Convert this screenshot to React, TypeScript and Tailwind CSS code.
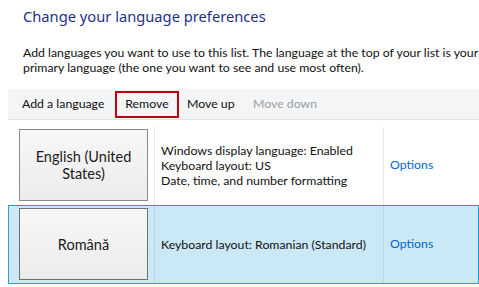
const rows = [
  {
    name: ["English (United", "States)"],
    details: ["Windows display language: Enabled", "Keyboard layout: US", "Date, time, and number formatting"],
    selected: false,
  },
  {
    name: ["Română"],
    details: ["Keyboard layout: Romanian (Standard)"],
    selected: true,
  },
];

function LanguageRow({ name, details, selected }: { name: string[]; details: string[]; selected: boolean }) {
  return (
    <div
      className={
        "flex h-[79px] border " +
        (selected ? "border-[#26a0da] bg-[#cbe8f6]" : "border-transparent bg-white")
      }
    >
      <div className="flex w-[145px] shrink-0 items-start pl-[10px] pt-[2px]">
        <div
          className={
            "flex h-[72px] w-[129px] flex-col items-center justify-center border bg-gradient-to-b from-[#f7f7f7] to-[#ececec] text-[14.5px] leading-[17px] text-[#1a1a1a] " +
            (selected ? "border-[#6b7278]" : "border-[#8a8a8a]")
          }
        >
          {name.map((n) => (
            <span key={n}>{n}</span>
          ))}
        </div>
      </div>
      <div
        className={
          "flex w-[229px] shrink-0 flex-col justify-center border-l pl-[6px] text-[12.3px] leading-[15px] text-[#111] whitespace-nowrap" +
          (selected ? " border-[#b3d7f0]" : " border-[#dceaf7]")
        }
      >
        {details.map((d) => (
          <span key={d}>{d}</span>
        ))}
      </div>
      <div
        className={
          "flex flex-1 items-center border-l pl-[6px] text-[12.3px] text-[#0066cc]" +
          (selected ? " border-[#b3d7f0]" : " border-[#dceaf7]")
        }
      >
        Options
      </div>
    </div>
  );
}

export default function App() {
  return (
    <div
      className="h-[287px] w-[479px] overflow-hidden bg-white"
      style={{ fontFamily: 'Lato, "Noto Sans", sans-serif' }}
    >
      <h1
        className="pl-[23px] pt-[6px] text-[14.7px] leading-[20px] text-[#1e3287]"
        style={{ fontFamily: '"Noto Sans", sans-serif' }}
      >
        Change your language preferences
      </h1>
      <p className="mt-[19px] whitespace-nowrap pl-[23px] text-[12.3px] leading-[15px] text-[#111]">
        Add languages you want to use to this list. The language at the top of your list is your
        <br />
        primary language (the one you want to see and use most often).
      </p>
      <div className="ml-[8px] mt-[14px] flex h-[31px] items-center border-b border-[#e2e4e7] bg-[#f4f5f7] text-[12.3px] text-[#111]">
        <span className="ml-[14px] w-[85px]">Add a language</span>
        <span className="ml-[8px] flex h-[27px] w-[64px] items-center justify-center border-2 border-[#c0000b]">
          Remove
        </span>
        <span className="ml-[8px] w-[50px]">Move up</span>
        <span className="ml-[16px] text-[#9a9ea3]">Move down</span>
      </div>
      <div className="ml-[8px] mt-[6px] flex flex-col">
        {rows.map((r) => (
          <LanguageRow key={r.name[0]} {...r} />
        ))}
      </div>
    </div>
  );
}
